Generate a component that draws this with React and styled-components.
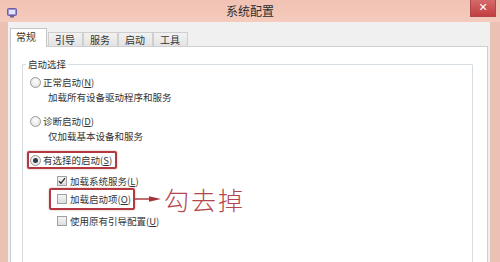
import React from "react";
import styled, { createGlobalStyle } from "styled-components";

const Global = createGlobalStyle`
  html, body { margin: 0; padding: 0; overflow: hidden; background: #ffffff; }
  body { font-family: "Noto Sans CJK SC", "Noto Sans", sans-serif; }
`;

const FONT = `"Noto Sans CJK SC", "Noto Sans", sans-serif`;

const Window = styled.div`
  width: 500px;
  height: 262px;
  background: #ebc1b4;
  display: flex;
  flex-direction: column;
  overflow: hidden;
  font-family: ${FONT};
  color: #3b3b3b;
`;

const TitleBar = styled.div`
  height: 22px;
  flex: none;
  display: grid;
  grid-template-columns: 1fr auto 1fr;
  align-items: center;
  background: linear-gradient(#f1c2b3, #f4cbbd);
`;

const AppIcon = styled.svg`
  margin-left: 7px;
  width: 10px;
  height: 10px;
  margin-top: 3px;
`;

const Title = styled.div`
  font-size: 12px;
  line-height: 22px;
  color: #2e2e2e;
`;

const CloseButton = styled.div`
  justify-self: end;
  align-self: start;
  width: 24px;
  height: 16px;
  margin-right: 4px;
  background: linear-gradient(#d56a6a, #c23f40);
  border: 1px solid #b0464a;
  border-top: none;
  color: #ffffff;
  font-size: 11px;
  font-weight: bold;
  font-family: "DejaVu Sans", sans-serif;
  line-height: 15px;
  text-align: center;
`;

const Frame = styled.div`
  flex: 1;
  display: flex;
  padding: 0 10px 0 8px;
  min-height: 0;
`;

const Client = styled.div`
  flex: 1;
  background: #f0f0f0;
  padding: 7px 2px 0 2px;
  display: flex;
  flex-direction: column;
  min-height: 0;
`;

const TabStrip = styled.div`
  display: flex;
  align-items: flex-end;
  height: 18px;
  position: relative;
  z-index: 1;
  margin-bottom: -1px;
`;

const Tab = styled.div`
  box-sizing: border-box;
  width: ${(p) => (p.$active ? 37 : 35)}px;
  height: ${(p) => (p.$active ? 19 : 15)}px;
  margin-right: ${(p) => (p.$active ? 1 : 0)}px;
  border: 1px solid ${(p) => (p.$active ? "#c6c6c6" : "#cfcfcf")};
  border-bottom: ${(p) => (p.$active ? "none" : "1px solid #cfcfcf")};
  background: ${(p) => (p.$active ? "#ffffff" : "linear-gradient(#f2f2f2, #e3e3e3)")};
  font-size: 10px;
  line-height: ${(p) => (p.$active ? 16 : 13)}px;
  padding-left: ${(p) => (p.$active ? 5 : 6)}px;
  color: #333;
`;

const Panel = styled.div`
  flex: 1;
  background: #ffffff;
  border: 1px solid #cbd0d4;
  border-bottom: none;
  min-height: 0;
  overflow: hidden;
`;

const GroupBox = styled.fieldset`
  margin: 10px 14px 0 11px;
  padding: 4px 7px 40px 7px;
  border: 1px solid #d6dde2;
  border-radius: 1px;
  min-height: 230px;
`;

const Legend = styled.legend`
  font-size: 9.5px;
  line-height: 14px;
  padding: 0 2px;
  margin-left: -4px;
  color: #333;
`;

const Row = styled.div`
  display: flex;
  align-items: center;
  height: 14px;
  margin-top: ${(p) => p.$top || 0}px;
  margin-left: ${(p) => p.$indent || 0}px;
`;

const Label = styled.span`
  font-size: 9.5px;
  line-height: 14px;
  white-space: nowrap;
  color: #333;
  margin-left: ${(p) => p.$gap || 3}px;
  u { text-decoration: underline; text-underline-offset: 1px; }
`;

const Desc = styled.div`
  font-size: 9.5px;
  line-height: 14px;
  height: 14px;
  margin-top: 1px;
  margin-left: 18px;
  color: #333;
  white-space: nowrap;
`;

const Marked = styled.div`
  display: inline-flex;
  align-items: center;
  box-sizing: border-box;
  height: ${(p) => p.$h}px;
  border: 2px solid #b33840;
  border-radius: 2px;
  box-shadow: 0 0 2px rgba(140, 30, 40, 0.45);
  padding: 0 ${(p) => p.$pr}px 0 ${(p) => p.$pl}px;
  margin-left: ${(p) => p.$ml}px;
`;

const MarkedRow = styled.div`
  display: flex;
  align-items: center;
  height: ${(p) => p.$h}px;
  margin-top: ${(p) => p.$top || 0}px;
`;

const RadioDot = styled.span`
  box-sizing: border-box;
  width: 11px;
  height: 11px;
  border-radius: 50%;
  border: 1px solid #9a9a9a;
  background: radial-gradient(circle at 50% 40%, #ffffff, #dcdcdc);
  display: inline-flex;
  align-items: center;
  justify-content: center;
  flex: none;
  &::after {
    content: "";
    width: 5px;
    height: 5px;
    border-radius: 50%;
    background: ${(p) => (p.$checked ? "#2f3a45" : "transparent")};
  }
`;

const Box = styled.span`
  box-sizing: border-box;
  width: 10px;
  height: 10px;
  border: 1px solid #a0a0a0;
  background: linear-gradient(#f4f4f4, #dedede);
  display: inline-flex;
  align-items: center;
  justify-content: center;
  flex: none;
`;

const Arrow = styled.svg`
  width: 28px;
  height: 12px;
  flex: none;
`;

const Callout = styled.span`
  font-family: "Noto Sans CJK SC", sans-serif;
  font-size: 25px;
  font-weight: 300;
  line-height: 22px;
  letter-spacing: 2px;
  color: #b4474d;
  margin-left: 1px;
  white-space: nowrap;
`;

function Radio({ checked, children }) {
  return (
    <>
      <RadioDot $checked={checked} />
      <Label $gap={2}>{children}</Label>
    </>
  );
}

function Check({ checked, children }) {
  return (
    <>
      <Box>
        {checked && (
          <svg width="8" height="8" viewBox="0 0 8 8">
            <path d="M1 4.2 L3 6.3 L7 1.2" fill="none" stroke="#2c2c2c" strokeWidth="1.3" />
          </svg>
        )}
      </Box>
      <Label $gap={3}>{children}</Label>
    </>
  );
}

export default function App() {
  return (
    <>
      <Global />
      <Window>
        <TitleBar>
          <AppIcon viewBox="0 0 10 10">
            <rect x="0.5" y="0.5" width="9" height="7" rx="1" fill="#9b8fd0" stroke="#6a5fa0" />
            <rect x="2" y="2" width="6" height="4" fill="#dfe6ff" />
            <rect x="3" y="8" width="4" height="1.5" fill="#6a5fa0" />
          </AppIcon>
          <Title>系统配置</Title>
          <CloseButton>✕</CloseButton>
        </TitleBar>
        <Frame>
          <Client>
            <TabStrip>
              <Tab $active>常规</Tab>
              <Tab>引导</Tab>
              <Tab>服务</Tab>
              <Tab>启动</Tab>
              <Tab>工具</Tab>
            </TabStrip>
            <Panel>
              <GroupBox>
                <Legend>启动选择</Legend>
                <Row>
                  <Radio>正常启动(<u>N</u>)</Radio>
                </Row>
                <Desc>加载所有设备驱动程序和服务</Desc>
                <Row $top={10}>
                  <Radio>诊断启动(<u>D</u>)</Radio>
                </Row>
                <Desc>仅加载基本设备和服务</Desc>
                <MarkedRow $h={18} $top={8}>
                  <Marked $h={18} $pl={1} $pr={3} $ml={-3}>
                    <Radio checked>有选择的启动(<u>S</u>)</Radio>
                  </Marked>
                </MarkedRow>
                <Row $top={5} $indent={27}>
                  <Check checked>加载系统服务(<u>L</u>)</Check>
                </Row>
                <MarkedRow $h={22}>
                  <Marked $h={22} $pl={6} $pr={2} $ml={19}>
                    <Check>加载启动项(<u>O</u>)</Check>
                  </Marked>
                  <Arrow viewBox="0 0 28 12">
                    <line x1="0" y1="6" x2="18" y2="6" stroke="#a3323b" strokeWidth="1.4" />
                    <path d="M14 3.2 L26 6 L14 8.8 Z" fill="#a3323b" />
                  </Arrow>
                  <Callout>勾去掉</Callout>
                </MarkedRow>
                <Row $top={4} $indent={27}>
                  <Check>使用原有引导配置(<u>U</u>)</Check>
                </Row>
              </GroupBox>
            </Panel>
          </Client>
        </Frame>
      </Window>
    </>
  );
}
